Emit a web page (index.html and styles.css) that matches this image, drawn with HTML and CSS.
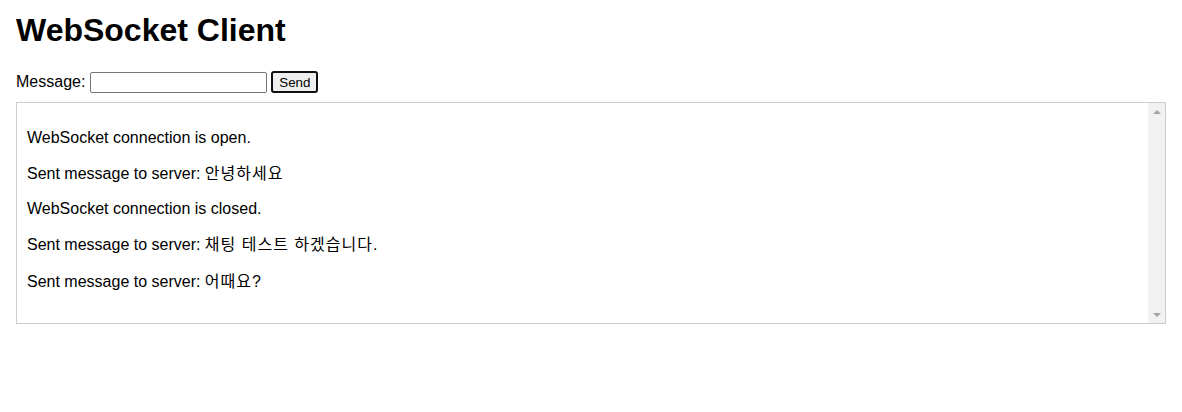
FILE: index.html
```html
<!DOCTYPE html>
<html lang="en">
<head>
<meta charset="utf-8">
<title>WebSocket Client</title>
<link rel="stylesheet" href="styles.css">
</head>
<body>
  <h1 class="title">WebSocket Client</h1>
  <div class="send-row">
    <label class="send-label" for="message">Message:</label>
    <input class="send-input" id="message" type="text">
    <button class="send-button" type="button">Send</button>
  </div>
  <div class="log">
    <div class="log-content">
      <p class="log-line">WebSocket connection is open.</p>
      <p class="log-line">Sent message to server: <span class="ko" lang="ko">안녕하세요</span></p>
      <p class="log-line">WebSocket connection is closed.</p>
      <p class="log-line">Sent message to server: <span class="ko" lang="ko">채팅 테스트 하겠습니다.</span></p>
      <p class="log-line">Sent message to server: <span class="ko" lang="ko">어때요?</span></p>
    </div>
    <div class="scrollbar" aria-hidden="true">
      <div class="scroll-btn"><span class="arrow arrow-up"></span></div>
      <div class="scroll-track"></div>
      <div class="scroll-btn"><span class="arrow arrow-down"></span></div>
    </div>
  </div>
</body>
</html>
```

FILE: styles.css
```css
html, body {
  background: #fff;
}

body {
  margin: 0;
  padding: 12px 16px;
  font-family: "Liberation Sans", Arial, "Noto Sans CJK KR", sans-serif;
  font-size: 16px;
  color: #000;
}

.title {
  margin: 0 0 22px;
  font-size: 32px;
  font-weight: bold;
}

.send-row {
  margin-bottom: 9px;
}

.send-input {
  box-sizing: border-box;
  width: 177px;
  height: 21px;
  padding: 1px 2px;
  border: 1px solid #767676;
  border-radius: 2px;
  font-family: "Liberation Sans", Arial, sans-serif;
  font-size: 13.333px;
  vertical-align: baseline;
}

.send-button {
  box-sizing: border-box;
  height: 22px;
  padding: 0 6px;
  border: 2px solid #101010;
  border-radius: 3px;
  background: #efefef;
  color: #000;
  font-family: "Liberation Sans", Arial, sans-serif;
  font-size: 13.333px;
}

.log {
  display: flex;
  height: 220px;
  border: 1px solid #ccc;
}

.log-content {
  flex: 1;
  min-width: 0;
  padding: 10px;
  overflow-y: auto;
}

.scrollbar {
  display: flex;
  flex-direction: column;
  width: 17px;
  background: #f1f1f1;
}

.scroll-btn {
  display: flex;
  align-items: center;
  justify-content: center;
  height: 17px;
}

.scroll-track {
  flex: 1;
}

.arrow {
  width: 0;
  height: 0;
  border-left: 4px solid transparent;
  border-right: 4px solid transparent;
}

.arrow-up {
  border-bottom: 4px solid #a3a3a3;
}

.arrow-down {
  border-top: 4px solid #a3a3a3;
}

.log-line {
  margin: 16px 0;
}

.ko {
  line-height: 21px;
  letter-spacing: 1px;
}
```
